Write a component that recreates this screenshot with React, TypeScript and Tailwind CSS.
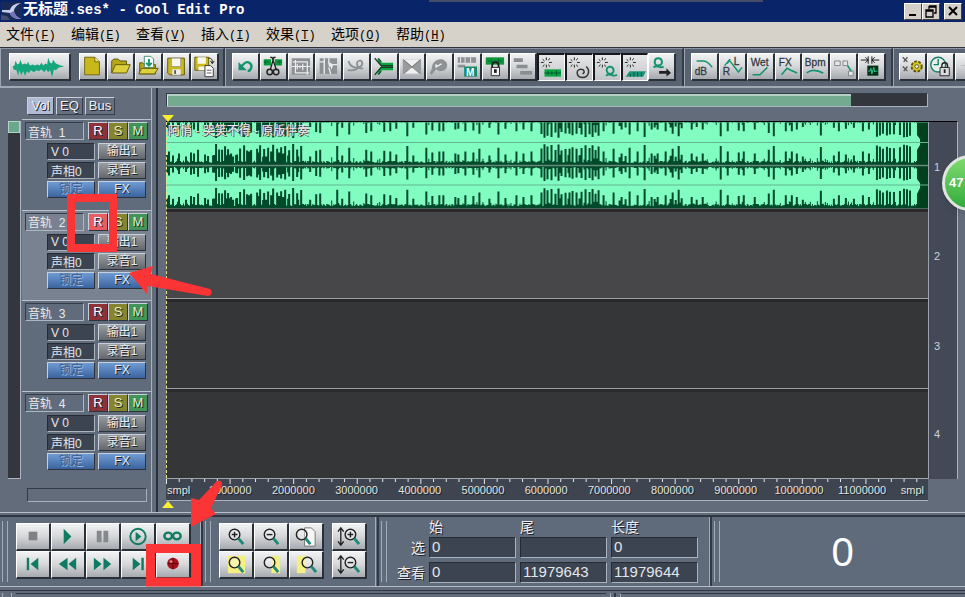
import React from "react";

const ui = "font-['Liberation_Sans','Noto_Sans_CJK_SC',sans-serif]";
const mono = "font-['Liberation_Mono','Noto_Sans_CJK_SC',monospace]";
const raised =
  "border-t border-l border-r-2 border-b-2 border-t-white border-l-white border-r-[#2a3039] border-b-[#2a3039] bg-linear-to-b from-[#f1f2f3] via-[#d5d7d9] to-[#a6a9ae]";
const pressed =
  "border-t-2 border-l-2 border-r border-b border-t-[#15181d] border-l-[#15181d] border-r-white border-b-white bg-linear-to-b from-[#e6e7e8] to-[#c3c5c8]";
const sunken =
  "border border-t-[#252a33] border-l-[#252a33] border-r-[#a9b2bf] border-b-[#a9b2bf] bg-[#3d4451] text-[#e3e6ea]";

const G = "#10946f";
const D = "#33383d";

function Burst() {
  return (
    <path d="M8 2v3M8 10v3M2 7.500h3M11 7.500h3M4 4l2 2M12 3l-2 2M4 12l2-2M12 12l-2-2" stroke="#111" strokeWidth="1" fill="none" />
  );
}

const icons: Record<string, React.ReactNode> = {
  "New": <><path d="M5 3h11l5 5v14H5z" fill="#c8b81c" stroke="#6d640c" /><path d="M16 3v5h5" fill="#efe98d" stroke="#6d640c" /></>,
  "Open": <><path d="M4 20V7l2-2h5l2 2h7v4" fill="#b7a61a" stroke="#5c5508" /><path d="M4 20l4-9h16l-4 9z" fill="#dccf3c" stroke="#5c5508" /></>,
  "Open append": <><path d="M4 21V9h3l2 2h12v10z" fill="#b7a61a" stroke="#5c5508" /><path d="M9 2h7l3 3v9H9z" fill="#fff" stroke="#487" /><path d="M14 5v7M11 9l3 3 3-3" stroke={G} strokeWidth="2" fill="none" /><path d="M3 21l3-6h18l-4 6z" fill="#dccf3c" stroke="#5c5508" /></>,
  "Save": <><path d="M4 4h18v18H6l-2-2z" fill="#c9b91f" stroke="#5c5508" /><path d="M8 4h10v9H8z" fill="#f7f7ee" stroke="#777" strokeWidth=".6" /><path d="M9 16h9v6H9z" fill="#eee" /><path d="M11 17h2v4h-2z" fill="#555" /></>,
  "Save all": <><path d="M3 3h15v14H3z" fill="#c9b91f" stroke="#5c5508" /><path d="M6 3h9v7H6zM7 13h7v4H7z" fill="#f7f7ee" /><path d="M14 12h6l3 3v9h-9z" fill="#fff" stroke="#333" /><path d="M16 17h5M16 20h5" stroke="#555" /><path d="M18 4c3 0 4 1 4 5m-2-2l2 3 2-3" stroke="#111" fill="none" /></>,
  "Undo": <><path d="M9 13l3-3c4-4 9 0 8 4-.5 2-2 4-4 4" stroke={G} strokeWidth="2.500" fill="none" /><path d="M6 8v9h9z" fill={G} /></>,
  "Cut": <><path d="M3 5h8v7H3zM15 5h8v7h-8z" fill="#0a9a3a" /><path d="M3 8h6M17 8h6M5 6v5M20 6v5" stroke="#064" /><path d="M10 3l2 0 5 14M16 3l-2 0-4 14" stroke="#222" strokeWidth="1.500" fill="none" /><circle cx="9.500" cy="19" r="3" fill="none" stroke="#222" strokeWidth="1.600" /><circle cx="16.500" cy="19" r="3" fill="none" stroke="#222" strokeWidth="1.600" /></>,
  "Trim": <><path d="M3 4h20v18H3z" fill="#8d9094" /><path d="M3 13h20M7 6v14h15M4 8h16v14M9 10v6m3-4v3m3-5v7" stroke="#eceded" fill="none" strokeWidth="1.300" /></>,
  "Loop": <><path d="M4 4h19v17H4z" fill="#8d9094" /><path d="M9 4v4M14 4v5l1 4 1-4 1 5 1-3h5M4 8h5v13M14 14l2 7" stroke="#eceded" fill="none" strokeWidth="1.500" /></>,
  "Envelope": <path d="M5 7c1 6 8 9 13 6 4-3 1-8-2-6-4 2-1 9 5 8M4 17c6 1 10 0 13-4" stroke="#8d9094" strokeWidth="2" fill="none" />,
  "Split": <><path d="M11 9h12v8H11l-5 5v-4l4-5-4-5V4z" fill="#0aa641" /><path d="M3 4l7 8h13M3 22l7-8h13M7 4l3 4M7 22l3-4" stroke="#153b22" strokeWidth="1.300" fill="none" /></>,
  "Crossfade": <><path d="M3 5h20v16H3z" fill="#989b9e" /><path d="M4 5l9 8 9-8zM4 21l9-8 9 8z" fill="#f0f0f0" /><path d="M4 6l18 15M22 6L4 21" stroke="#777" /></>,
  "Glue": <><path d="M3 20c4-5 1-8 5-12 5-5 13-3 14 3 0 7-8 9-12 5l-5 6z" fill="#8f9295" /><path d="M9 14l7-4M9 11l3 2" stroke="#eee" strokeWidth="1.500" /></>,
  "Mixdown": <><path d="M3 3h20v6H3zM3 11h8v3H3z" fill="#8d9094" /><path d="M6 3v6M11 3v6M17 3v6" stroke="#eee" /><path d="M10 13h14v11H10z" fill="#168b6f" /></>,
  "Lock time": <><path d="M3 3h20v8H3z" fill="#0a9a3a" /><path d="M5 7h16M9 4v6M17 4v6" stroke="#063" /><path d="M10 15v-3c0-5 7-5 7 0v3" fill="none" stroke="#222" strokeWidth="2" /><path d="M9 14h9v9H9z" fill="#f5f5f5" stroke="#222" /><path d="M12 16h3v4h-3z" fill="#222" /></>,
  "Group": <path d="M3 4h10v4H3zM6 11h12v4H6zM10 18h13v4H10z" fill="#8a8d91" />,
  "Snap waves": <><Burst /><path d="M6 15h18v8H6z" fill="#0aa641" /><path d="M6 19h18M10 17v4M14 17v4M19 16v6" stroke="#053" /></>,
  "Snap loops": <><Burst /><path d="M21 12c5 5 2 12-4 12-7 0-8-9-2-9 4 0 5 3 2 5" fill="none" stroke="#333" strokeWidth="1.600" /></>,
  "Snap cues": <><Burst /><path d="M17 20c-5 0-6-7-1-8 5 0 6 7 1 8zM12 22c4-4 6 2 12-1" fill="none" stroke={G} strokeWidth="2" /></>,
  "Snap ruler": <><Burst /><path d="M3 23l4-6h18l-3 6z" fill="#18957a" /><path d="M8 20v3m4-5v5m4-5v5m4-5v5" stroke="#053" /></>,
  "Follow": <><path d="M10 12c-5 0-5-8 0-8s6 8 0 8zM5 14c4-4 6 2 11-1" fill="none" stroke={G} strokeWidth="2.200" /><path d="M11 18h8v-3l5 5-5 4v-3h-8z" fill="#222" /></>,
  "dB": <path d="M5 7h8c3 0 6 3 9 7" fill="none" stroke={G} strokeWidth="1.500" />,
  "Pan envelope": <path d="M5 12l5-6 10 13 4-5M8 10l3-5" stroke={G} strokeWidth="1.500" fill="none" />,
  "Wet": <path d="M5 22h8l8-8" stroke={G} strokeWidth="1.700" fill="none" />,
  "FX envelope": <path d="M6 22l6-7 4 2 7 3" stroke={G} strokeWidth="1.700" fill="none" />,
  "Bpm": <path d="M4 20c6-5 12-3 18 0" stroke={G} strokeWidth="1.700" fill="none" />,
  "Clips": <><path d="M4 7h6v5H4zM13 7h5v5h-5zM19 18h5v5h-5z" fill="#e5e7e8" stroke="#7d8084" /><path d="M18 12l4 6" stroke={G} strokeWidth="1.700" /></>,
  "Punch": <><path d="M2 6h8m-3-3l3 3-3 3M22 6h-8m3-3l-3 3 3 3M10 2v8M14 2v8" stroke="#111" fill="none" /><path d="M9 12h12v11H9z" fill="#063018" /><path d="M10 18h2l1-3 1 6 2-7 1 5 1-1h2" stroke="#2fd494" fill="none" /></>,
  "Settings": <><path d="M3 3l5 5M8 3L4 8M3 13l5 5M8 13l-4 5" stroke="#555" strokeWidth="1.400" /><circle cx="18" cy="13" r="5.500" fill="#d7c61c" stroke="#5c5508" strokeWidth="2" strokeDasharray="3 1.500" /><circle cx="18" cy="13" r="2" fill="#eee" stroke="#554" /></>,
  "Lock clock": <><circle cx="11" cy="11" r="8" fill="#e8f0ee" stroke="#1a7c6b" strokeWidth="1.500" /><path d="M11 5v6h-5" stroke="#1a7c6b" strokeWidth="1.500" fill="none" /><path d="M15 15v-3c0-4 6-4 6 0v3" fill="none" stroke="#222" strokeWidth="1.500" /><path d="M13 14h10v9H13z" fill="#ddd" stroke="#222" /><path d="M17 16h2v4h-2z" fill="#222" /></>,
  "Grid": <path d="M5 12h18M12 4v18" stroke="#bbb" />,
};

const letters: Record<string, React.ReactNode> = {
  "dB": <text x="3" y="22" fontSize="11" fill={D} stroke={D} strokeWidth=".3">dB</text>,
  "Mixdown": <text x="12" y="23" fontSize="11" fontWeight="bold" fill="#fff">M</text>,
  "Wet": <text x="3" y="12" fontSize="11" fill={D} stroke={D} strokeWidth=".3">Wet</text>,
  "FX envelope": <text x="3" y="12" fontSize="11" fill={D} stroke={D} strokeWidth=".3">FX</text>,
  "Bpm": <text x="2" y="12" fontSize="11" fill={D} stroke={D} strokeWidth=".3">Bpm</text>,
  "Pan envelope": <><text x="15" y="11" fontSize="11" fill={D} stroke={D} strokeWidth=".3">L</text><text x="3" y="22" fontSize="11" fill={D} stroke={D} strokeWidth=".3">R</text></>,
};

function ToolButton({ name, down }: { name: string; down?: boolean }) {
  return (
    <button aria-label={name} className={`h-7 min-w-0 flex-1 overflow-hidden ${down ? pressed : raised}`}>
      <svg viewBox="0 0 27 26" className="h-[25px] w-full">
        {icons[name]}
        {letters[name]}
      </svg>
    </button>
  );
}

const groupEdge = "border-l border-l-[#9aa4b3] border-r-2 border-r-[#343b47] border-t border-t-[#8b95a5]";

function Toolbar() {
  const edit = ["Undo", "Cut", "Trim", "Loop", "Envelope", "Split", "Crossfade", "Glue", "Mixdown", "Lock time", "Group"];
  const snap = ["Snap waves", "Snap loops", "Snap cues", "Snap ruler"];
  return (
    <div className="flex h-[39px] shrink-0 overflow-hidden border-t border-[#2c333e] bg-[#586271]">
      <div className={`flex w-[225px] shrink-0 items-start gap-2 pt-1 pl-2 ${groupEdge}`}>
        <button aria-label="Waveform view" className={`h-7 w-[62px] ${raised}`}>
          <svg viewBox="0 0 60 26" className="h-[25px] w-full">
            <path d="M2 13l2-1 1-5 2 4 2-1 1-4 2 5 3-1 2 1 1-3 2 4 3-1 2 1 3-1 2 1 2-3 2 3 2-2 2 1 1-7 2 5 2 1 1-4 3 4 5 2 4 1-6 1-3 3-2-1-2 8-2-7-2 2-2-3-2 3-3-3-3 2-2-1-3 2-3-2-2 3-2-2-2 5-2-5-2 4-2-5-1 6-2-6-3-1z" fill="#16a67d" />
          </svg>
        </button>
        <div className="flex w-[140px]">
          {["New", "Open", "Open append", "Save", "Save all"].map((n) => <ToolButton key={n} name={n} />)}
        </div>
      </div>
      <div className={`w-[459px] shrink-0 pt-1 pl-1.5 ${groupEdge}`}>
        <div className="flex w-[444px]">
          {edit.map((n) => <ToolButton key={n} name={n} />)}
          {snap.map((n) => <ToolButton key={n} name={n} down />)}
          <ToolButton name="Follow" />
        </div>
      </div>
      <div className={`w-[209px] shrink-0 pt-1 pl-1.5 ${groupEdge}`}>
        <div className="flex w-[195px]">
          {["dB", "Pan envelope", "Wet", "FX envelope", "Bpm", "Clips", "Punch"].map((n) => <ToolButton key={n} name={n} />)}
        </div>
      </div>
      <div className="min-w-0 flex-1 overflow-hidden border-t border-l border-t-[#8b95a5] border-l-[#9aa4b3] pt-1 pl-[5px]">
        <div className="flex w-[84px]">
          {["Settings", "Lock clock", "Grid"].map((n) => <ToolButton key={n} name={n} />)}
        </div>
      </div>
    </div>
  );
}

function TitleBar() {
  const box = "flex h-[17px] w-[18px] items-center justify-center border border-t-white border-l-white border-r-[#404040] border-b-[#404040] bg-[#d4d0c8]";
  return (
    <header className="relative flex h-[22px] shrink-0 items-center bg-[#0a246a] pr-[3px]">
      <svg viewBox="0 0 21 20" className="ml-px h-5 w-[21px]">
        <path d="M0 1h21v18H0z" fill="#182b57" />
        <path d="M1 9h8c1-4 5-7 11-7-4 2-7 5-7 8s3 6 7 8c-6 0-10-2-11-6L1 11z" fill="#c8cce9" />
        <path d="M13 10c0 3 3 6 7 8-6 0-10-2-11-6z" fill="#7571bd" />
        <path d="M0 14l6 1 3 4H0z" fill="#454d70" />
      </svg>
      <h1 className={`ml-px flex-1 text-sm font-bold whitespace-pre text-white ${mono}`}>
        <span className="text-[15px]">无标题</span>.ses* - Cool Edit Pro
      </h1>
      <div className="absolute top-0 left-[429px] h-[2px] w-[334px] bg-[#464b66]" />
      <button aria-label="Minimize" className={box}><svg viewBox="0 0 14 13" className="h-[13px] w-3.5"><path d="M3 9h7v2H3z" /></svg></button>
      <button aria-label="Restore" className={box}><svg viewBox="0 0 14 13" className="h-[13px] w-3.5"><path d="M5 1h7v7h-2M5 2h7M5 1v3M2 5h7v7H2zM2 6h7" fill="none" stroke="#000" strokeWidth="1.300" /></svg></button>
      <button aria-label="Close" className={`ml-1 ${box}`}><svg viewBox="0 0 14 13" className="h-[13px] w-3.5"><path d="M3 2l8 8M11 2l-8 8" stroke="#000" strokeWidth="2" /></svg></button>
    </header>
  );
}

function MenuBar() {
  const items = [["文件", "F"], ["编辑", "E"], ["查看", "V"], ["插入", "I"], ["效果", "T"], ["选项", "O"], ["帮助", "H"]];
  return (
    <nav className={`flex h-[25px] shrink-0 items-center bg-[#d6d2c9] pl-1.5 text-black ${mono}`}>
      {items.map(([t, k]) => (
        <button key={k} className="flex w-[65px] items-baseline text-sm">
          {t}<span className="text-xs">(<u>{k}</u>)</span>
        </button>
      ))}
    </nav>
  );
}

const shade = "[text-shadow:1px_1px_0_#1d222b]";
const tick = "border border-t-[#c9d0da] border-l-[#c9d0da] border-r-[#2d333e] border-b-[#2d333e]";
const cell = "h-[17px] w-12 px-[3px] text-xs leading-[15px]";

function Track({ n, armed }: { n: number; armed?: boolean }) {
  return (
    <section aria-label={`音轨 ${n}`} className={`flex min-h-0 flex-1 flex-col border-t border-t-[#bac2cd] pt-[2px] pl-[3px] ${armed ? "bg-[#788291]" : "bg-[#606b7b]"}`}>
      <div className="flex">
        <input aria-label="音轨名" defaultValue={`音轨  ${n}`} className="mr-1 h-[18px] w-[59px] border border-t-[#363d49] border-l-[#363d49] border-r-[#adb6c2] border-b-[#adb6c2] px-[2px] text-xs whitespace-pre text-[#e8eaee]" />
        <button className={`h-[18px] w-5 text-[13px] leading-4 ${tick} ${shade} ${armed ? "bg-[#ec5b60]" : "bg-[#8c3238]"} text-white`}>R</button>
        <button className={`h-[18px] w-5 bg-[#85842f] text-[13px] leading-4 text-[#f0eeb8] ${tick} ${shade}`}>S</button>
        <button className={`h-[18px] w-5 bg-[#439457] text-[13px] leading-4 text-[#d2f2d5] ${tick} ${shade}`}>M</button>
      </div>
      <div className="mt-[3px] ml-[22px] grid grid-cols-[48px_48px] gap-x-[3px] gap-y-[2px]">
        <input aria-label="音量" defaultValue="V 0" className={`${cell} ${sunken}`} />
        <button className={`${cell} ${tick} ${shade} bg-linear-to-b from-[#9a9da1] to-[#63666b] text-[#e9ebed]`}>输出1</button>
        <input aria-label="声相" defaultValue="声相0" className={`${cell} ${sunken}`} />
        <button className={`${cell} ${tick} ${shade} bg-linear-to-b from-[#9a9da1] to-[#63666b] text-[#e9ebed]`}>录音1</button>
        <button className={`${cell} ${tick} bg-linear-to-b from-[#6f9bd4] to-[#3b649f] text-[#3b5d90] [text-shadow:1px_1px_0_#9ab9e2]`}>锁定</button>
        <button className={`${cell} ${tick} bg-linear-to-b from-[#6f9bd4] to-[#3b649f] text-[#e4ebf5] ${shade}`}>FX</button>
      </div>
    </section>
  );
}

function TrackPanel() {
  const tab = "h-[18px] border border-t-[#c9d0da] border-l-[#c9d0da] border-r-[#39404c] border-b-[#39404c] text-[13px] leading-4 text-[#eef0f3]";
  return (
    <aside className="flex w-[158px] shrink-0 border-r-2 border-r-[#2b313c] pl-2">
      <div role="scrollbar" aria-controls="tracks" aria-valuenow={0} aria-label="音轨滚动" className="mt-[33px] h-[358px] w-[13px] border-r border-b border-r-[#aab3bf] border-b-[#aab3bf] bg-[#33363d]">
        <div className="h-3 border border-[#b3d3c5] bg-[#69a88c]" />
      </div>
      <div className="ml-px flex w-[130px] flex-col border-r border-[#a7b0bd]">
        <div className="mb-[3px] flex gap-[2px] pt-[9px] pb-px pl-[5px]">
          <button className={`w-[27px] bg-[#b1bad5] ${tab} ${shade}`}>Vol</button>
          <button className={`w-[27px] bg-[#667080] ${tab} ${shade}`}>EQ</button>
          <button className={`w-[30px] bg-[#667080] ${tab} ${shade}`}>Bus</button>
        </div>
        <div id="tracks" className="flex h-[362px] flex-col">
          <Track n={1} /><Track n={2} armed /><Track n={3} /><Track n={4} />
        </div>
        <div className="mt-[7px] ml-[5px] h-[14px] w-[120px] border border-t-[#323945] border-l-[#323945] border-r-[#a7b0bd] border-b-[#a7b0bd]" />
      </div>
    </aside>
  );
}

// Peak heights in percent, keyed by horizontal position inside the clip.
const peaks: [number, number][] = [
  [2, 60], [6, 40], [12, 50], [19, 35], [24, 55], [27, 50], [31, 70], [38, 45], [46, 40], [64, 50], [70, 45], [82, 60], [92, 55],
  [104, 60], [112, 55], [116, 50], [121, 40], [131, 35], [143, 35], [149, 65], [153, 70], [165, 30], [170, 90], [175, 40], [182, 80],
  [199, 70], [204, 60], [217, 65], [223, 60], [229, 45], [240, 90], [246, 40], [259, 80], [265, 55], [272, 60], [276, 60], [288, 50], [291, 45],
  [298, 60], [306, 55], [312, 75], [322, 40], [331, 80], [338, 45], [349, 60], [356, 50], [364, 60],
  [436, 60], [446, 75], [454, 50], [462, 80], [470, 60], [477, 95], [484, 50], [490, 50], [498, 60], [505, 75], [511, 90], [524, 50],
  [529, 35], [535, 50], [553, 90], [560, 60], [571, 55], [576, 60], [587, 50], [601, 70], [606, 90], [618, 60], [624, 60], [629, 50],
  [635, 35], [653, 85], [666, 40], [671, 60], [678, 45], [686, 40], [695, 60], [701, 50],
];

function buildSpikes() {
  let seed = 7;
  const rnd = () => (seed = (seed * 16807) % 2147483647) / 2147483647;
  const amp = new Array<number>(750).fill(0);
  for (let x = 0; x < 750; x++) {
    const busy = x < 165 || (x > 365 && x < 520) ? 1 : 0.6;
    amp[x] = rnd() < 0.22 ? rnd() * 0.45 * busy : rnd() * 0.12;
  }
  const dense: [number, number][] = [[49, 64], [73, 86], [90, 104], [106, 120], [122, 138], [374, 396], [398, 412], [414, 432], [709, 727], [732, 746]];
  for (const [a, b] of dense) for (let x = a; x < b; x += 3 + Math.floor(rnd() * 2)) amp[x] = 0.65 + rnd() * 0.35;
  for (const [x, p] of peaks) amp[x] = p / 100;
  let d = "";
  amp.forEach((a, x) => {
    const w = a > 0.3 ? 2 : 1;
    const bar = (y: number, h: number) => { d += `M${x} ${y}h${w}v${h.toFixed(1)}h${-w}z`; };
    bar(0, Math.max(0, a * 17 - 1));
    bar(43, -(2 + a * 19));
    bar(44, 1 + a * 14);
    bar(86, -(2 + a * 18));
  });
  return d;
}

const spikes = buildSpikes();

function Clip() {
  return (
    <div className="relative h-full overflow-hidden bg-[#82fdc2]">
      <svg viewBox="0 0 761 86" preserveAspectRatio="none" className="block h-full w-full">
        <path d={spikes} fill="#00492b" />
        <path d="M750 0h11v86h-11v-14l3-6v-5l-3-4V28l3-5v-6l-3-4z" fill="#00401f" />
        <path d="M0 0h761M0 20.500h761M0 63h761" stroke="#62b790" strokeWidth="1" />
        <path d="M0 43.500h761" stroke="#668b77" strokeWidth="1.500" />
      </svg>
      <span className="absolute top-0 left-[2px] text-xs leading-[18px] whitespace-pre text-[#f3e9ee] [text-shadow:1px_1px_0_#444,-1px_0_0_#777]">阿悄 - 哭笑不得 - 原版伴奏</span>
    </div>
  );
}

function Ruler() {
  const marks = Array.from({ length: 11 }, (_, i) => (i + 1) * 1000000);
  let d = "";
  for (let i = 0; i < 60; i++) d += `M${(i * 12.7 + 0.5).toFixed(1)} 0v${i % 5 === 0 ? 5 : 3}`;
  return (
    <div className={`h-[22px] border-b border-[#aab3bf] bg-[#3f4550] text-[11px] text-[#e3e4df] ${shade}`}>
      <svg viewBox="0 0 761 5" preserveAspectRatio="none" className="block h-[5px] w-full"><path d={d} stroke="#e6e8e8" /></svg>
      <div className="flex leading-[13px]">
        <span className="min-w-0 grow-[50] basis-0 pl-px">smpl</span>
        {marks.map((m) => (
          <span key={m} className="flex min-w-0 grow-[100] basis-0 justify-center">{m}</span>
        ))}
        <span className="flex min-w-0 grow-[48] basis-0 justify-end pr-1">smpl</span>
      </div>
    </div>
  );
}

function Session() {
  return (
    <main className="relative min-w-0 flex-1 pt-[5px] pl-2">
      <div className="mr-[37px]">
        <div role="scrollbar" aria-controls="lanes" aria-valuenow={0} aria-label="时间滚动" className="h-[14px] border border-t-[#343a45] border-l-[#343a45] border-r-[#aab3bf] border-b-[#aab3bf] bg-[#33363d]">
          <div className="h-3 w-[90%] border-t-2 border-l border-t-[#b4cfc4] border-l-[#d6e5de] bg-[#73aa90]" />
        </div>
      </div>
      <div className="mt-[14px] mr-[7px] flex h-[358px] border-t border-r border-t-black border-r-[#aab3bf]">
        <div id="lanes" className="relative flex min-w-0 flex-1 flex-col border-b border-[#9fa6ae] bg-[#353638]">
          <div className="h-[87px] border-b border-[#4a6757]"><Clip /></div>
          <div className="h-[90px] border-b border-[#9b9ea3] bg-[#474749]"><div className="h-[3px] bg-[#29292b]" /></div>
          <div className="h-[90px] border-b border-[#9b9ea3]"><div className="h-[3px] bg-[#29292b]" /></div>
          <div className="flex-1"><div className="h-[3px] bg-[#29292b]" /></div>
          <div className="absolute top-0 bottom-0 left-0 w-0 border-l border-dashed border-[#e8e48d]" />
        </div>
        <div className="flex w-[29px] flex-col border-l border-[#9aa1ab] bg-[#434956] pl-[5px] text-[11px] text-[#cdd1d7]">
          <span className="flex h-[90px] items-center">1</span>
          <span className="flex h-[90px] items-center">2</span>
          <span className="flex h-[89px] items-center">3</span>
          <span className="flex h-[89px] items-center">4</span>
        </div>
      </div>
      <div className="mr-[37px]"><Ruler /></div>
      <svg viewBox="0 0 12 7" className="absolute top-[27px] left-1 h-[7px] w-3"><path d="M0 0h12L6 7z" fill="#f7ee2e" /></svg>
      <svg viewBox="0 0 12 7" className="absolute top-[413px] left-1 h-[7px] w-3"><path d="M6 0l6 7H0z" fill="#f7ee2e" /></svg>
    </main>
  );
}

const T = "#0f7b62";
const transport: [string, React.ReactNode][] = [
  ["Stop", <path d="M12 8h9v9h-9z" fill="#7e8185" />],
  ["Play", <path d="M12 5l8 8-8 8z" fill={T} />],
  ["Pause", <path d="M10 7h5v12h-5zM17 7h5v12h-5z" fill="#85888c" />],
  ["Play to end", <><circle cx="16.500" cy="13" r="8" fill="none" stroke={T} strokeWidth="2" /><path d="M14 8l6 5-6 5z" fill={T} /></>],
  ["Play looped", <><ellipse cx="11.500" cy="12.500" rx="4" ry="3.500" fill="none" stroke={T} strokeWidth="2.500" /><ellipse cx="20.500" cy="12.500" rx="4" ry="3.500" fill="none" stroke={T} strokeWidth="2.500" /></>],
  ["Go to start", <path d="M10 6h2.500v13H10zM22 6v13l-8-6.500z" fill={T} />],
  ["Rewind", <path d="M16 6v13l-9-6.500zM25 6v13l-8-6.500z" fill={T} />],
  ["Forward", <path d="M7 6v13l8-6.500zM17 6v13l8-6.500z" fill={T} />],
  ["Go to end", <path d="M11 6v13l8-6.500zM20 6h2.500v13H20z" fill={T} />],
  ["Record", <><circle cx="16.500" cy="12" r="6" fill="#a5121b" /><path d="M11 12h11M16.500 6v12" stroke="#5e070c" /><circle cx="14.500" cy="10" r="1.500" fill="#e88" /></>],
];

function Lens({ sign, x = 15, y = 11 }: { sign?: string; x?: number; y?: number }) {
  return (
    <>
      <circle cx={x} cy={y} r="5.500" fill="#fff" fillOpacity=".35" stroke="#222" strokeWidth="1.500" />
      {sign && <path d={`M${x - 3} ${y}h6${sign === "+" ? `M${x} ${y - 3}v6` : ""}`} stroke="#222" strokeWidth="1.500" />}
      <path d={`M${x + 4} ${y + 4}l5 6`} stroke="#1c8a78" strokeWidth="3" />
    </>
  );
}

const vertical = <path d="M8 5v16M5 8l3-4 3 4M5 18l3 4 3-4" stroke="#222" fill="none" strokeWidth="1.400" />;
const zooms: [string, React.ReactNode][] = [
  ["Zoom in", <Lens sign="+" />],
  ["Zoom out", <Lens sign="-" />],
  ["Zoom full", <><path d="M15 4h7l4 4v15H15z" fill="#f6f6f6" stroke="#777" /><Lens x={12} /></>],
  ["Zoom selection", <><path d="M8 4h18v18H8z" fill="#f4ef83" /><Lens /></>],
  ["Zoom left", <><path d="M17 4h9v18h-9z" fill="#f4ef83" /><Lens /></>],
  ["Zoom right", <><path d="M7 4h9v18H7z" fill="#f4ef83" /><Lens x={18} /></>],
];
const vzooms: [string, React.ReactNode][] = [
  ["Zoom in vertically", <>{vertical}<Lens sign="+" x={18} /></>],
  ["Zoom out vertically", <>{vertical}<Lens sign="-" x={18} /></>],
];

function IconGrid({ items, cols }: { items: [string, React.ReactNode][]; cols: string }) {
  return (
    <div className={`grid ${cols}`}>
      {items.map(([n, icon]) => (
        <button key={n} aria-label={n} className={`h-7 w-[35px] ${raised}`}>
          <svg viewBox="0 0 33 26" className="h-[25px] w-8">{icon}</svg>
        </button>
      ))}
    </div>
  );
}

function Handle() {
  return <div className="my-1 w-[6px] border-x border-[#a3adba]" />;
}

const bar = "flex shrink-0 border-r-2 border-[#323944]";

function BottomBar() {
  const label = "text-sm leading-5 text-[#eceef1] [text-shadow:1px_1px_0_#1d222b]";
  const field = `h-[21px] w-full px-[2px] text-[15px] ${sunken}`;
  return (
    <footer className="flex h-[72px] shrink-0 border-t-2 border-b border-t-[#2f3641] border-b-[#b5bdc8] bg-[#5f6a7a]">
      <div className={`${bar} w-[203px] gap-2 pl-[2px]`}>
        <Handle />
        <div className="flex-1 pt-[6px]"><IconGrid items={transport} cols="grid-cols-[repeat(5,35px)]" /></div>
        <div className="w-px bg-[#a3adba]" />
      </div>
      <div className={`${bar} w-[176px] gap-2 pl-[2px]`}>
        <Handle />
        <div className="pt-[6px]"><IconGrid items={zooms} cols="grid-cols-[repeat(3,35px)]" /></div>
        <div className="pt-[6px]"><IconGrid items={vzooms} cols="grid-cols-[35px]" /></div>
        <div className="w-px bg-[#a3adba]" />
      </div>
      <div className={`${bar} w-[333px] gap-2 pl-[2px]`}>
        <Handle />
        <div className="grid flex-1 grid-cols-[30px_87px_87px_87px] content-start items-center gap-x-[4px]">
          <span />
          <span className={label}>始</span>
          <span className={label}>尾</span>
          <span className={label}>长度</span>
          <span className={`text-right ${label}`}>选</span>
          <input aria-label="选 始" defaultValue="0" className={field} />
          <input aria-label="选 尾" defaultValue="" className={field} />
          <input aria-label="选 长度" defaultValue="0" className={field} />
          <span className={`mt-1 text-right ${label}`}>查看</span>
          <input aria-label="查看 始" defaultValue="0" className={`mt-1 ${field}`} />
          <input aria-label="查看 尾" defaultValue="11979643" className={`mt-1 ${field}`} />
          <input aria-label="查看 长度" defaultValue="11979644" className={`mt-1 ${field}`} />
        </div>
        <div className="w-px bg-[#a3adba]" />
      </div>
      <div className="flex min-w-0 flex-1 pl-[2px]">
        <Handle />
        <output className="flex flex-1 items-center justify-center text-[40px] text-white">0</output>
      </div>
    </footer>
  );
}

function Annotations() {
  return (
    <svg viewBox="0 0 965 597" className="pointer-events-none absolute top-0 left-0 h-[597px] w-[965px]">
      <path d="M71 198h42v50H71z" fill="none" stroke="#fb3436" strokeWidth="8" />
      <path d="M150.500 548.500h46v33.500h-46z" fill="none" stroke="#fb3436" strokeWidth="9" />
      <path d="M129 273l24-7-2 8 59 15c3 2 2 7-2 7l-60-10-1 8z" fill="#fb3436" />
      <path d="M217 481c3-1 6 1 5 4l-11 23 5 6-25 13 0-29 8 2z" fill="#fb3436" />
    </svg>
  );
}

export default function App() {
  return (
    <div className={`relative flex min-h-screen flex-col overflow-hidden bg-[#626c7b] ${ui}`}>
      <TitleBar />
      <MenuBar />
      <Toolbar />
      <div className="flex h-[427px] shrink-0 border-t-2 border-b border-t-[#a0a9b6] border-b-[#b5bdc8]">
        <TrackPanel />
        <Session />
      </div>
      <div className="h-[2px] shrink-0" />
      <BottomBar />
      <div className="h-1 shrink-0 border-b border-[#303742]" />
      <div className="flex flex-1 items-end gap-1 pl-[2px]">
        <div className="h-1 w-[10px] border-x border-[#a3adba]" />
        <div className="h-1 w-[590px] border-t border-[#303742]" />
        <div className="h-1 w-[6px] border-r-2 border-l border-r-[#303742] border-l-[#a3adba]" />
        <div className="h-1 flex-1 border-t border-l border-t-[#303742] border-l-[#a3adba]" />
      </div>
      <div className="absolute top-[155px] right-[-33px] flex h-14 w-14 items-center rounded-full border-3 border-[#dfe6df] bg-linear-to-b from-[#7ddb6e] to-[#2eab3c] pl-1 text-[13px] font-bold text-white shadow-md">47</div>
      <Annotations />
    </div>
  );
}
